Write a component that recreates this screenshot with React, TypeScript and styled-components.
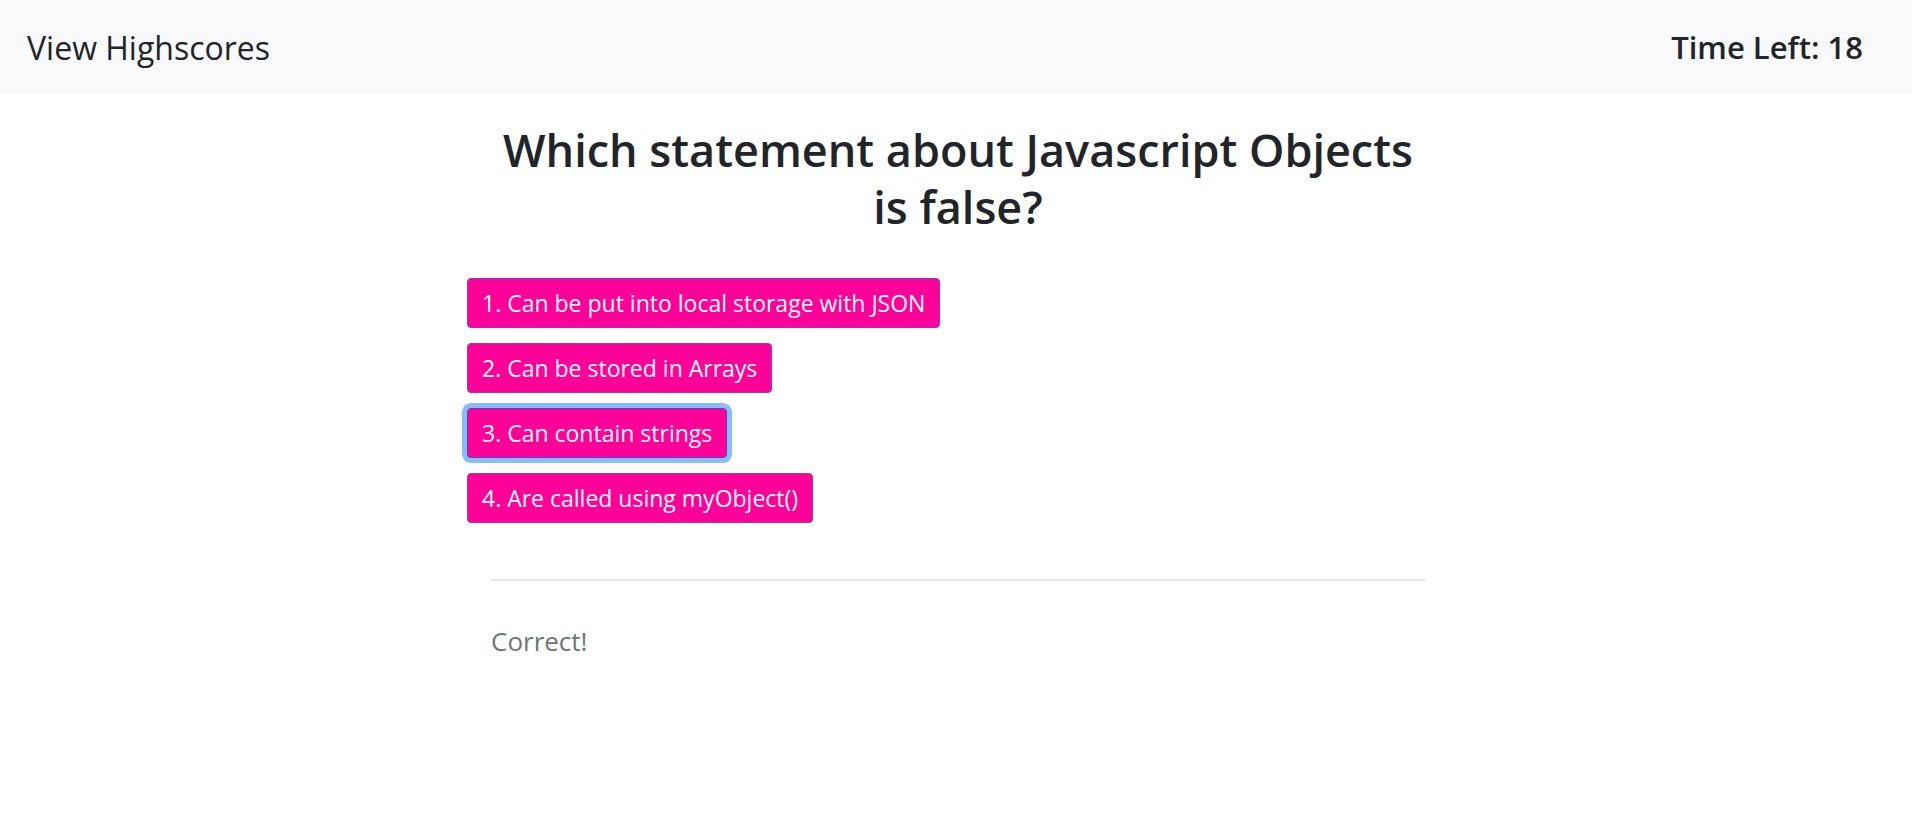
import { createGlobalStyle, styled } from "styled-components"

const GlobalStyle = createGlobalStyle`
  * { box-sizing: border-box; }
  body {
    margin: 0;
    background: #ffffff;
    color: #212529;
    font-family: "Open Sans", "Noto Sans", "Liberation Sans", sans-serif;
  }
`

const Navbar = styled.nav`
  height: 94px;
  background: #f8f9fa;
  display: flex;
  align-items: center;
  justify-content: space-between;
  padding: 0 49px 0 27px;
`
const Brand = styled.a`
  font-size: 32px;
  color: #212529;
  text-decoration: none;
  cursor: pointer;
`
const Timer = styled.div`
  font-size: 31px;
  font-weight: 600;
  color: #212529;
`
const Main = styled.main`
  width: 934px;
  margin: 0 0 0 calc(50% - 465px);
`
const Question = styled.h3`
  margin: 27px 0 43px;
  font-size: 45px;
  line-height: 57px;
  font-weight: 600;
  text-align: center;
  color: #212529;
`
const Choices = styled.div`
  display: flex;
  flex-direction: column;
  align-items: flex-start;
  gap: 15px;
  margin-left: -24px;
`
const Choice = styled.button<{ $focused?: boolean }>`
  height: 50px;
  padding: 0 14px;
  font-family: inherit;
  font-size: 23px;
  color: #ffffff;
  background: #ff0099;
  border: 1px solid ${(p) => (p.$focused ? "#5b3dbf" : "#8d3ccc")};
  border-radius: 4px;
  cursor: pointer;
  box-shadow: ${(p) => (p.$focused ? "0 0 0 5px #86bcf9" : "none")};
`
const Divider = styled.hr`
  margin: 56px 0 0;
  border: 0;
  border-top: 2px solid #e6e6e6;
`
const Feedback = styled.p`
  margin: 40px 0 0;
  font-size: 26px;
  line-height: 40px;
  color: #6c757d;
`

const choices = [
  "1. Can be put into local storage with JSON",
  "2. Can be stored in Arrays",
  "3. Can contain strings",
  "4. Are called using myObject()",
]

export default function App() {
  return (
    <>
      <GlobalStyle />
      <Navbar>
        <Brand>View Highscores</Brand>
        <Timer>Time Left: 18</Timer>
      </Navbar>
      <Main>
        <Question>Which statement about Javascript Objects is false?</Question>
        <Choices>
          {choices.map((c, i) => (
            <Choice key={c} $focused={i === 2}>
              {c}
            </Choice>
          ))}
        </Choices>
        <Divider />
        <Feedback>Correct!</Feedback>
      </Main>
    </>
  )
}
